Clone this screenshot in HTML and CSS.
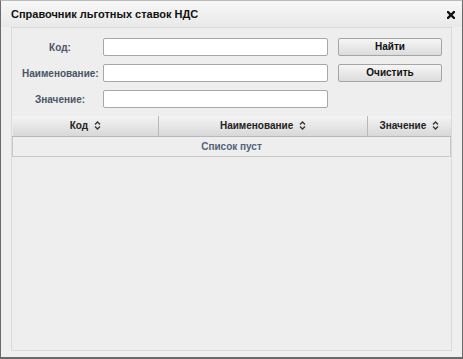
FILE: index.html
```html
<!DOCTYPE html>
<html lang="ru">
<head>
    <meta charset="UTF-8">
    <title>Справочник льготных ставок НДС</title>
    <link rel="stylesheet" href="styles.css">
</head>
<body>
    <div class="window">
        <!-- Title bar -->
        <div class="titlebar">
            <span class="title">Справочник льготных ставок НДС</span>
            <svg class="close" width="8" height="8" viewBox="0 0 8 8">
                <path d="M1 1 L7 7 M7 1 L1 7" stroke="#111" stroke-width="2.4" stroke-linecap="square"/>
            </svg>
        </div>

        <!-- Content -->
        <div class="panel">
            <div class="form">
                <label for="code">Код:</label>
                <input type="text" id="code">
                <a href="#" class="button">Найти</a>

                <label for="name">Наименование:</label>
                <input type="text" id="name">
                <a href="#" class="button">Очистить</a>

                <label for="value">Значение:</label>
                <input type="text" id="value">
                <span></span>
            </div>

            <table class="grid">
                <thead>
                    <tr>
                        <th class="col-code">Код <svg class="sort" width="7" height="9" viewBox="0 0 7 9"><path d="M1 3.5 L3.5 1 L6 3.5 M1 5.5 L3.5 8 L6 5.5" fill="none" stroke="#333" stroke-width="1.3"/></svg></th>
                        <th class="col-name">Наименование <svg class="sort" width="7" height="9" viewBox="0 0 7 9"><path d="M1 3.5 L3.5 1 L6 3.5 M1 5.5 L3.5 8 L6 5.5" fill="none" stroke="#333" stroke-width="1.3"/></svg></th>
                        <th class="col-value">Значение <svg class="sort" width="7" height="9" viewBox="0 0 7 9"><path d="M1 3.5 L3.5 1 L6 3.5 M1 5.5 L3.5 8 L6 5.5" fill="none" stroke="#333" stroke-width="1.3"/></svg></th>
                    </tr>
                </thead>
                <tbody>
                    <tr>
                        <td colspan="3" class="empty">Список пуст</td>
                    </tr>
                </tbody>
            </table>
        </div>
    </div>
</body>
</html>
```
FILE: styles.css
```css
/* Global Styles */
body, html {
    margin: 0;
    padding: 0;
    font-family: Arial, 'Liberation Sans', sans-serif;
    background-color: #eeeeee;
}

/* Window */
.window {
    width: 463px;
    height: 359px;
    box-sizing: border-box;
    border: 1px solid #6a6a6a;
    border-top-color: #bbb;
    border-bottom-width: 2px;
    background: #efefef;
    display: flex;
    flex-direction: column;
}

.titlebar {
    height: 26px;
    display: flex;
    align-items: center;
    justify-content: space-between;
    padding: 0 7px 0 10px;
    background: linear-gradient(#f7f7f7, #e9e9e9);
}

.title {
    font-size: 11px;
    font-weight: bold;
    color: #111;
}

.close {
    margin-top: 1px;
}

/* Main panel */
.panel {
    flex: 1;
    margin: 0 10px 6px 10px;
    border: 1px solid #dadada;
    background: #eeeeee;
    padding-top: 10px;
}

.form {
    display: grid;
    grid-template-columns: 76px 230px 104px;
    column-gap: 5px;
    row-gap: 8px;
    padding-left: 10px;
    align-items: center;
}

.form label {
    text-align: center;
    font-size: 10px;
    font-weight: bold;
    color: #4b5565;
}

.form input {
    box-sizing: border-box;
    height: 18px;
    width: 225px;
    border: 1px solid #a8a8a8;
    border-radius: 2px;
    background: #fff;
    padding: 0 3px;
    font-size: 11px;
}

.button {
    display: block;
    box-sizing: border-box;
    height: 18px;
    line-height: 16px;
    border: 1px solid #a5a5a5;
    border-radius: 2px;
    background: linear-gradient(#f6f6f6, #dcdcdc);
    text-align: center;
    text-decoration: none;
    font-size: 10px;
    font-weight: bold;
    color: #111;
}

/* Table */
.grid {
    width: 100%;
    margin-top: 8px;
    border-collapse: collapse;
    font-size: 10px;
}

.grid th {
    height: 20px;
    box-sizing: border-box;
    padding: 0;
    background: linear-gradient(#f4f4f4, #d8d8d8);
    border: 1px solid #b8b8b8;
    border-top: none;
    color: #222;
    font-weight: bold;
    text-align: center;
}

.grid th:first-child {
    border-left: none;
}

.grid th:last-child {
    border-right: none;
}

.col-code { width: 146px; }
.col-name { width: 209px; }

.sort {
    margin-left: 3px;
    vertical-align: -1px;
}

.grid td.empty {
    height: 19px;
    padding: 0;
    border: 1px solid #cfc8c0;
    border-top: none;
    text-align: center;
    font-weight: bold;
    color: #52627a;
}
```
